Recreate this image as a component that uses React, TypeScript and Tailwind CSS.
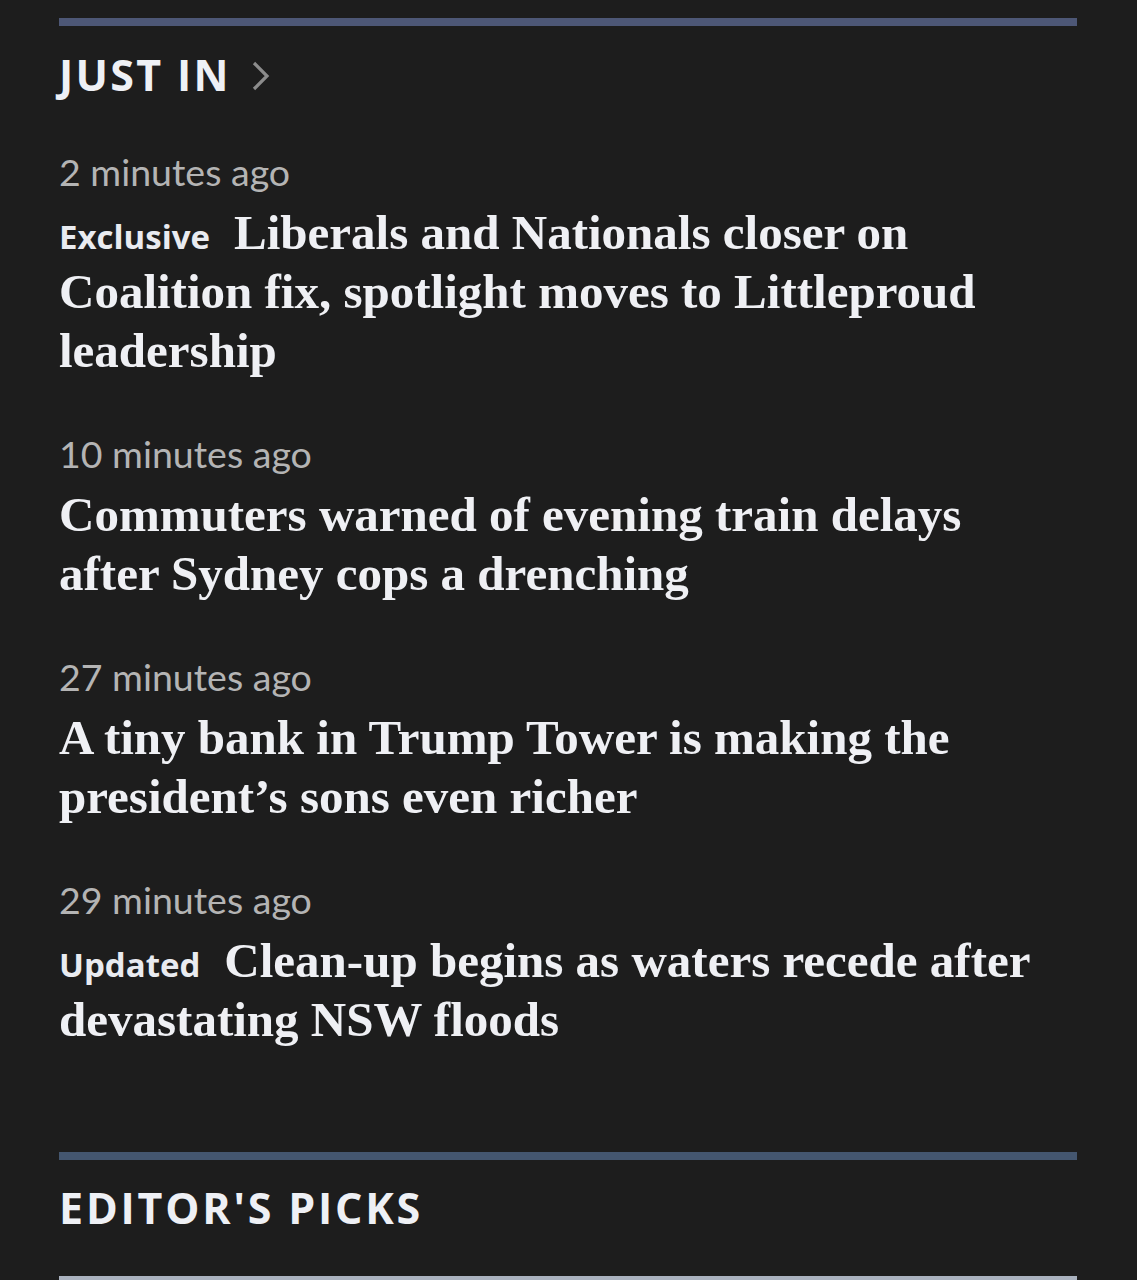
import React from 'react'

interface Story {
  id: string
  time: string
  label?: string
  lines: string[]
}

const stories: Story[] = [
  {
    id: 'coalition',
    time: '2 minutes ago',
    label: 'Exclusive',
    lines: ['Liberals and Nationals closer on', 'Coalition fix, spotlight moves to Littleproud', 'leadership']
  },
  {
    id: 'trains',
    time: '10 minutes ago',
    lines: ['Commuters warned of evening train delays', 'after Sydney cops a drenching']
  },
  {
    id: 'trump-bank',
    time: '27 minutes ago',
    lines: ['A tiny bank in Trump Tower is making the', 'president\u2019s sons even richer']
  },
  {
    id: 'floods',
    time: '29 minutes ago',
    label: 'Updated',
    lines: ['Clean-up begins as waters recede after', 'devastating NSW floods']
  }
]

const sans = "font-['Open_Sans','Noto_Sans',sans-serif]"

export default function App() {
  return (
    <div className="min-h-[1280px] w-[1137px] bg-[#1d1d1d] overflow-hidden">
      <div className="pl-[59px] pr-[60px] pt-[18px]">
        {/* Just in */}
        <section>
          <div className="h-[8px] bg-[#4d5776]" />
          <a href="#" className="mt-[23px] flex items-center gap-[20px]">
            <h2 className={`${sans} text-[43px] leading-[52px] font-bold tracking-[2.3px] text-[#eef0f5]`}>
              JUST IN
            </h2>
            <svg width="19" height="30" viewBox="0 0 19 30" fill="none" className="mt-[1px]">
              <path d="M3 2 L16 15 L3 28" stroke="#8c8c8c" strokeWidth="3.2" />
            </svg>
          </a>

          <ul className="mt-[49px] flex flex-col gap-[52px]">
            {stories.map(story => (
              <li key={story.id}>
                <p className="font-['Lato',sans-serif] text-[37.5px] leading-[44px] text-[#b4b4b4]">
                  {story.time}
                </p>
                <h3 className="mt-[9px] font-['Liberation_Serif',serif] text-[49px] leading-[59px] font-bold text-[#eff0f4]">
                  {story.label && (
                    <span className={`${sans} mr-[24px] text-[33px] leading-none font-bold text-[#e9ebf0]`}>
                      {story.label}
                    </span>
                  )}
                  {story.lines.map((line, i) => (
                    <React.Fragment key={i}>
                      {i > 0 && <br />}
                      {line}
                    </React.Fragment>
                  ))}
                </h3>
              </li>
            ))}
          </ul>
        </section>

        {/* Editor's picks */}
        <section className="mt-[103px]">
          <div className="h-[8px] bg-[#44566f]" />
          <h2 className={`${sans} mt-[22px] text-[43px] leading-[52px] font-bold tracking-[2.8px] text-[#eef0f5]`}>
            EDITOR&apos;S PICKS
          </h2>
          <div className="mt-[42px] h-[6px] bg-[#aab2bf]" />
        </section>
      </div>
    </div>
  )
}
